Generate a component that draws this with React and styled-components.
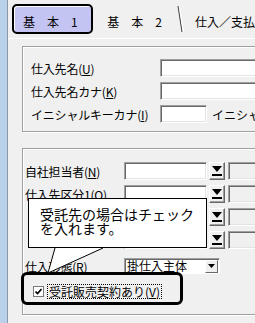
import styled, { createGlobalStyle } from "styled-components";

const GlobalStyle = createGlobalStyle`
  html, body { margin: 0; padding: 0; background: #f0f0f0; }
  body {
    font-family: "Noto Sans CJK JP", "Liberation Sans", sans-serif;
    font-size: 12px;
    color: #000;
  }
`;

const Root = styled.div`
  position: relative;
  width: 255px;
  height: 323px;
  overflow: hidden;
  display: flex;
  background: #f0f0f0;
`;

const SideStrip = styled.div`
  width: 7px;
  flex: none;
  background: #b9d1ea;
  border-right: 1px solid #8d99a8;
`;

const Main = styled.div`
  flex: 1;
  display: flex;
  flex-direction: column;
  min-width: 0;
`;

const TabBar = styled.div`
  height: 38px;
  display: flex;
  align-items: flex-start;
  padding: 4px 0 0 4px;
  box-sizing: border-box;
  white-space: nowrap;
`;

const Tab = styled.div`
  height: 30px;
  box-sizing: border-box;
  display: flex;
  align-items: center;
  line-height: 12px;
  padding-top: 6px;
  ${({ $active, $pad }) =>
    $active
      ? `
    width: 86px;
    padding-left: 9px;
    border: 2px solid #000;
    border-radius: 5px;
    background: #c4c4f2;
    box-shadow: inset 1px 1px 0 #fff;
  `
      : `
    padding-left: ${$pad}px;
  `}
`;

const TabDivider = styled.svg`
  width: 8px;
  height: 30px;
  margin-left: 15px;
  flex: none;
`;

const TabPage = styled.div`
  flex: 1;
  border-top: 1px solid #fff;
  padding-left: 14px;
`;

const GroupBox = styled.div`
  width: 260px;
  box-sizing: border-box;
  margin-top: ${({ $top }) => $top}px;
  height: ${({ $h }) => $h}px;
  border: 1px solid #a0a0a0;
  box-shadow: inset 1px 1px 0 #fff, 1px 1px 0 #fff;
  padding: ${({ $pad }) => $pad};
  display: flex;
  flex-direction: column;
  gap: 5px;
`;

const Row = styled.div`
  display: flex;
  align-items: center;
  height: ${({ $h }) => $h || 18}px;
  margin-top: ${({ $mt }) => $mt || 0}px;
`;

const Label = styled.span`
  width: ${({ $w }) => $w}px;
  flex: none;
  white-space: nowrap;
  letter-spacing: -0.2px;
`;

const TextBox = styled.div`
  width: ${({ $w }) => ($w ? `${$w}px` : "auto")};
  flex: ${({ $w }) => ($w ? "none" : "1")};
  height: 18px;
  box-sizing: border-box;
  background: ${({ $disabled }) => ($disabled ? "#f0f0f0" : "#fff")};
  border: 1px solid;
  border-color: #a0a0a0 #fff #fff #a0a0a0;
  box-shadow: inset 1px 1px 0 #696969, inset -1px -1px 0 #e3e3e3;
`;

const PickButton = styled.div`
  width: 16px;
  height: 18px;
  flex: none;
  margin: 0 3px 0 2px;
  box-sizing: border-box;
  background: #f0f0f0;
  border: 1px solid;
  border-color: #fff #696969 #696969 #fff;
  box-shadow: inset -1px -1px 0 #a0a0a0;
  display: flex;
  align-items: center;
  justify-content: center;
`;

const SideText = styled.span`
  margin-left: 5px;
  white-space: nowrap;
`;

const Combo = styled.div`
  width: 96px;
  height: 16px;
  box-sizing: border-box;
  background: #fff;
  border: 1px solid;
  border-color: #a0a0a0 #fff #fff #a0a0a0;
  box-shadow: inset 1px 1px 0 #696969;
  display: flex;
  align-items: center;
  justify-content: space-between;
  padding-left: 2px;
  line-height: 12px;
`;

const ComboArrow = styled.div`
  width: 13px;
  height: 13px;
  box-sizing: border-box;
  margin-right: 1px;
  background: #f0f0f0;
  border: 1px solid;
  border-color: #fff #696969 #696969 #fff;
  display: flex;
  align-items: center;
  justify-content: center;
`;

const CheckRow = styled.div`
  display: flex;
  align-items: center;
  height: 14px;
  margin-top: 5px;
  padding-left: 8px;
`;

const CheckBox = styled.div`
  width: 11px;
  height: 11px;
  box-sizing: border-box;
  background: #fff;
  border: 1px solid #7a7a7a;
  display: flex;
  align-items: center;
  justify-content: center;
`;

const CheckLabel = styled.span`
  margin-left: 4px;
  padding: 0 1px;
  outline: 1px dotted #000;
  line-height: 13px;
  white-space: nowrap;
`;

const Highlight = styled.div`
  position: absolute;
  left: 21px;
  top: 272px;
  width: 162px;
  height: 33px;
  box-sizing: border-box;
  border: 3px solid #000;
  border-radius: 6px;
`;

const Callout = styled.div`
  position: absolute;
  left: 28px;
  top: 198px;
  width: 179px;
  height: 50px;
  box-sizing: border-box;
  background: #fff;
  border: 1px solid #000;
  padding: 8px 0 0 11px;
  font-size: 14px;
  line-height: 14px;
`;

const CalloutTail = styled.svg`
  position: absolute;
  left: 44px;
  top: 246px;
  width: 62px;
  height: 30px;
`;

const PickIcon = () => (
  <svg width="10" height="11" viewBox="0 0 10 11">
    <polygon points="0,0 10,0 5,6" fill="#000" />
    <rect x="0" y="8" width="10" height="2" fill="#000" />
  </svg>
);

const SmallArrow = () => (
  <svg width="7" height="4" viewBox="0 0 7 4">
    <polygon points="0,0 7,0 3.5,4" fill="#000" />
  </svg>
);

const PickField = ({ label, disabled }) => (
  <Row>
    <Label $w={99}>{label}</Label>
    <TextBox $w={83} />
    <PickButton>
      <PickIcon />
    </PickButton>
    <TextBox $disabled={disabled} />
  </Row>
);

export default function App() {
  return (
    <>
      <GlobalStyle />
      <Root>
        <SideStrip />
        <Main>
          <TabBar>
            <Tab $active>基　本　1</Tab>
            <Tab $pad={14}>基　本　2</Tab>
            <TabDivider viewBox="0 0 8 30">
              <line x1="1" y1="2" x2="5" y2="28" stroke="#404040" strokeWidth="1" />
              <line x1="2.5" y1="2" x2="6.5" y2="28" stroke="#fff" strokeWidth="1" />
            </TabDivider>
            <Tab $pad={10}>仕入／支払</Tab>
          </TabBar>
          <TabPage>
            <GroupBox $top={7} $h={86} $pad="12px 0 0 8px">
              <Row>
                <Label $w={129}>仕入先名(<u>U</u>)</Label>
                <TextBox />
              </Row>
              <Row>
                <Label $w={129}>仕入先名カナ(<u>K</u>)</Label>
                <TextBox />
              </Row>
              <Row>
                <Label $w={129}>イニシャルキーカナ(<u>I</u>)</Label>
                <TextBox $w={47} />
                <SideText>イニシャ</SideText>
              </Row>
            </GroupBox>
            <GroupBox $top={16} $h={167} $pad="13px 0 0 2px">
              <PickField label={<>自社担当者(<u>N</u>)</>} disabled />
              <PickField label={<>仕入先区分1(<u>O</u>)</>} disabled />
              <PickField label="" disabled />
              <PickField label="" disabled />
              <Row $h={16} $mt={4}>
                <Label $w={99}>仕入形態(R)</Label>
                <Combo>
                  掛仕入主体
                  <ComboArrow>
                    <SmallArrow />
                  </ComboArrow>
                </Combo>
              </Row>
              <CheckRow>
                <CheckBox>
                  <svg width="7" height="7" viewBox="0 0 7 7">
                    <polyline points="0.5,3.5 2.5,5.5 6.5,1" fill="none" stroke="#000" strokeWidth="1.6" />
                  </svg>
                </CheckBox>
                <CheckLabel>受託販売契約あり(<u>V</u>)</CheckLabel>
              </CheckRow>
            </GroupBox>
          </TabPage>
        </Main>
        <Highlight />
        <CalloutTail viewBox="0 0 62 30">
          <polygon points="11,2 4,27 59,2" fill="#fff" />
          <polyline points="11,2 4,27 59,2" fill="none" stroke="#000" strokeWidth="1" />
        </CalloutTail>
        <Callout>
          受託先の場合はチェック
          <br />
          を入れます。
        </Callout>
      </Root>
    </>
  );
}
